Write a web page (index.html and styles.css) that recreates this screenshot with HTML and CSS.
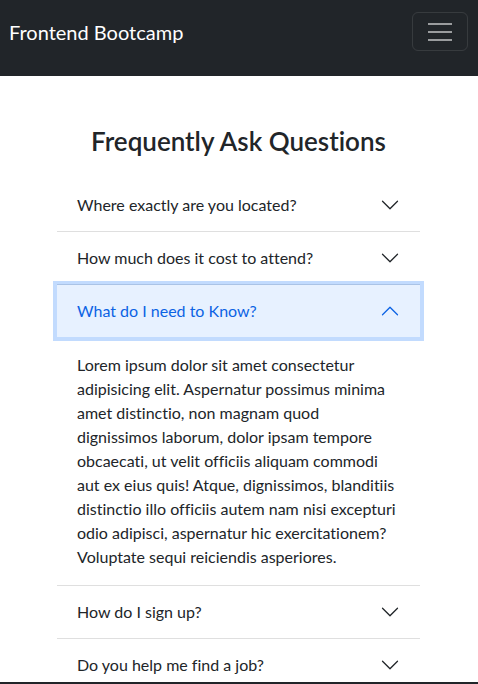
FILE: index.html
```html
<!DOCTYPE html>
<html lang="en">
<head>
<meta charset="utf-8">
<title>Frontend Bootcamp</title>
<link rel="stylesheet" href="styles.css">
</head>
<body>
<nav class="navbar">
  <a class="brand" href="#">Frontend Bootcamp</a>
  <button class="toggler" type="button" aria-label="Toggle navigation">
    <span class="bar"></span><span class="bar"></span><span class="bar"></span>
  </button>
</nav>
<main class="faq">
  <h2 class="faq-title">Frequently Ask Questions</h2>
  <div class="accordion">
    <div class="item">
      <button class="acc-btn" type="button"><span>Where exactly are you located?</span>
        <svg class="chev" viewBox="0 0 16 16"><path fill-rule="evenodd" d="M1.646 4.646a.5.5 0 0 1 .708 0L8 10.293l5.646-5.647a.5.5 0 0 1 .708.708l-6 6a.5.5 0 0 1-.708 0l-6-6a.5.5 0 0 1 0-.708z"/></svg>
      </button>
    </div>
    <div class="item">
      <button class="acc-btn" type="button"><span>How much does it cost to attend?</span>
        <svg class="chev" viewBox="0 0 16 16"><path fill-rule="evenodd" d="M1.646 4.646a.5.5 0 0 1 .708 0L8 10.293l5.646-5.647a.5.5 0 0 1 .708.708l-6 6a.5.5 0 0 1-.708 0l-6-6a.5.5 0 0 1 0-.708z"/></svg>
      </button>
    </div>
    <div class="item">
      <button class="acc-btn active" type="button"><span>What do I need to Know?</span>
        <svg class="chev up" viewBox="0 0 16 16"><path fill-rule="evenodd" d="M1.646 4.646a.5.5 0 0 1 .708 0L8 10.293l5.646-5.647a.5.5 0 0 1 .708.708l-6 6a.5.5 0 0 1-.708 0l-6-6a.5.5 0 0 1 0-.708z"/></svg>
      </button>
      <div class="acc-body">Lorem ipsum dolor sit amet consectetur adipisicing elit. Aspernatur possimus minima amet distinctio, non magnam quod dignissimos laborum, dolor ipsam tempore obcaecati, ut velit officiis aliquam commodi aut ex eius quis! Atque, dignissimos, blanditiis distinctio illo officiis autem nam nisi excepturi odio adipisci, aspernatur hic exercitationem? Voluptate sequi reiciendis asperiores.</div>
    </div>
    <div class="item">
      <button class="acc-btn" type="button"><span>How do I sign up?</span>
        <svg class="chev" viewBox="0 0 16 16"><path fill-rule="evenodd" d="M1.646 4.646a.5.5 0 0 1 .708 0L8 10.293l5.646-5.647a.5.5 0 0 1 .708.708l-6 6a.5.5 0 0 1-.708 0l-6-6a.5.5 0 0 1 0-.708z"/></svg>
      </button>
    </div>
    <div class="item">
      <button class="acc-btn" type="button"><span>Do you help me find a job?</span>
        <svg class="chev" viewBox="0 0 16 16"><path fill-rule="evenodd" d="M1.646 4.646a.5.5 0 0 1 .708 0L8 10.293l5.646-5.647a.5.5 0 0 1 .708.708l-6 6a.5.5 0 0 1-.708 0l-6-6a.5.5 0 0 1 0-.708z"/></svg>
      </button>
    </div>
  </div>
</main>
<div class="bottom-edge"></div>
</body>
</html>
```
FILE: styles.css
```css
* { box-sizing: border-box; }
html, body { margin: 0; padding: 0; }
body {
  font-family: "Lato", "Noto Sans", sans-serif;
  font-size: 16px;
  line-height: 1.5;
  color: #212529;
  background: #fff;
  font-variant-ligatures: none;
}
.navbar {
  height: 76px;
  background: #212529;
  display: flex;
  justify-content: space-between;
  align-items: flex-start;
  padding: 12px 10px 0 9px;
}
.brand {
  color: #fff;
  text-decoration: none;
  font-size: 20px;
  line-height: 30px;
  margin-top: 5px;
}
.toggler {
  width: 56px;
  height: 39px;
  background: transparent;
  border: 1px solid rgba(255,255,255,.1);
  border-radius: 6px;
  display: flex;
  flex-direction: column;
  align-items: center;
  justify-content: center;
  gap: 6px;
  padding: 0;
}
.toggler .bar {
  display: block;
  width: 24px;
  height: 2px;
  background: rgba(255,255,255,.55);
}
.faq {
  padding: 50px 58px 0 57px;
}
.faq-title {
  margin: 0 0 22px;
  text-align: center;
  font-size: 26px;
  font-weight: 600;
  line-height: 31px;
}
.item {
  border-bottom: 1px solid rgba(0,0,0,.125);
}
.acc-btn {
  width: 100%;
  display: flex;
  align-items: center;
  justify-content: space-between;
  padding: 14px 20px;
  border: 0;
  background: #fff;
  font: inherit;
  color: #212529;
  line-height: 24px;
  text-align: left;
  position: relative;
}
.acc-btn.active {
  background: #e7f1ff;
  color: #0c63e4;
  box-shadow: 0 0 0 4px rgba(13,110,253,.25);
  z-index: 3;
}
.chev {
  width: 20px;
  height: 20px;
  fill: #212529;
  flex-shrink: 0;
}
.chev.up {
  fill: #0c63e4;
  transform: rotate(180deg);
}
.acc-body {
  padding: 16px 20px 16px;
  line-height: 24px;
}
.bottom-edge {
  position: fixed;
  left: 0;
  right: 0;
  bottom: 0;
  height: 2px;
  background: #212529;
}
```
